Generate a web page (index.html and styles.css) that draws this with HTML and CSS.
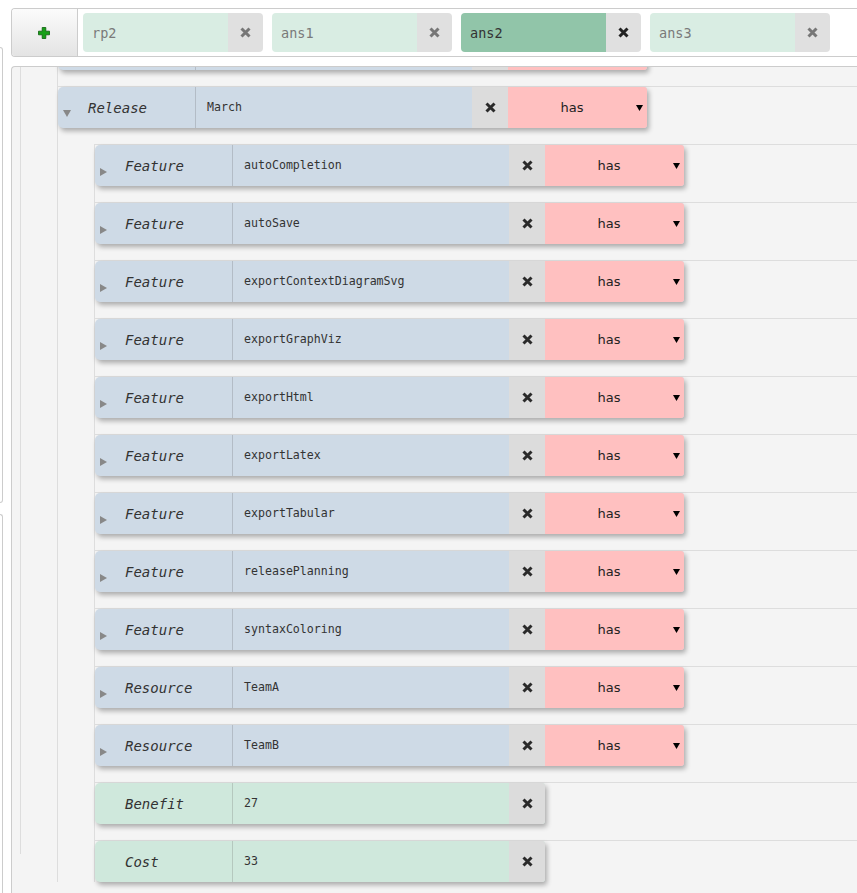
FILE: index.html
```html
<!DOCTYPE html>
<html>
<head>
<meta charset="utf-8">
<title>Model editor</title>
<link rel="stylesheet" href="styles.css">
</head>
<body>
<div class="page">
  <div class="side">
    <div class="side-box first"></div>
    <div class="side-box second"></div>
  </div>
  <div class="main">
    <div class="toolbar">
      <div class="add-btn">
        <svg width="12" height="12" viewBox="0 0 12 12"><path d="M4.2 0.5h3.6v3.7h3.7v3.6H7.8v3.7H4.2V7.8H0.5V4.2h3.7z" fill="#17a017" stroke="#0b5e0b" stroke-width="0.8"/></svg>
      </div>
      <div class="tabs">
        <div class="tab"><span class="tab-label">rp2</span><span class="tab-close"><svg class="x" width="11" height="11" viewBox="0 0 11 11"><path d="M1.5 1.5L9.5 9.5M9.5 1.5L1.5 9.5"/></svg></span></div>
        <div class="tab"><span class="tab-label">ans1</span><span class="tab-close"><svg class="x" width="11" height="11" viewBox="0 0 11 11"><path d="M1.5 1.5L9.5 9.5M9.5 1.5L1.5 9.5"/></svg></span></div>
        <div class="tab active"><span class="tab-label">ans2</span><span class="tab-close"><svg class="x" width="11" height="11" viewBox="0 0 11 11"><path d="M1.5 1.5L9.5 9.5M9.5 1.5L1.5 9.5"/></svg></span></div>
        <div class="tab"><span class="tab-label">ans3</span><span class="tab-close"><svg class="x" width="11" height="11" viewBox="0 0 11 11"><path d="M1.5 1.5L9.5 9.5M9.5 1.5L1.5 9.5"/></svg></span></div>
      </div>
    </div>

    <div class="panel">
      <div class="level level-1">
        <div class="level level-2">
          <div class="row row-clipped">
            <div class="block blue">
              <div class="type"><span class="toggle"></span></div>
              <div class="value"></div>
              <div class="remove"></div>
              <div class="relation"></div>
            </div>
          </div>
          <div class="row">
            <div class="block blue">
              <div class="type"><span class="toggle down"><svg width="8" height="7" viewBox="0 0 8 7"><path d="M0 0H8L4 7z"/></svg></span><span class="type-name">Release</span></div>
              <div class="value">March</div>
              <div class="remove"><svg class="x" width="11" height="11" viewBox="0 0 11 11"><path d="M1.5 1.5L9.5 9.5M9.5 1.5L1.5 9.5"/></svg></div>
              <div class="relation"><span class="relation-label">has</span><svg class="relation-arrow" width="7" height="6" viewBox="0 0 7 6"><path d="M0 0H7L3.5 6z"/></svg></div>
            </div>
            <div class="level level-3">
              <div class="row">
                <div class="block blue">
                  <div class="type"><span class="toggle"><svg width="8" height="8" viewBox="0 0 8 8"><path d="M0 0L7 4L0 8z"/></svg></span><span class="type-name">Feature</span></div>
                  <div class="value">autoCompletion</div>
                  <div class="remove"><svg class="x" width="11" height="11" viewBox="0 0 11 11"><path d="M1.5 1.5L9.5 9.5M9.5 1.5L1.5 9.5"/></svg></div>
                  <div class="relation"><span class="relation-label">has</span><svg class="relation-arrow" width="7" height="6" viewBox="0 0 7 6"><path d="M0 0H7L3.5 6z"/></svg></div>
                </div>
              </div>
              <div class="row">
                <div class="block blue">
                  <div class="type"><span class="toggle"><svg width="8" height="8" viewBox="0 0 8 8"><path d="M0 0L7 4L0 8z"/></svg></span><span class="type-name">Feature</span></div>
                  <div class="value">autoSave</div>
                  <div class="remove"><svg class="x" width="11" height="11" viewBox="0 0 11 11"><path d="M1.5 1.5L9.5 9.5M9.5 1.5L1.5 9.5"/></svg></div>
                  <div class="relation"><span class="relation-label">has</span><svg class="relation-arrow" width="7" height="6" viewBox="0 0 7 6"><path d="M0 0H7L3.5 6z"/></svg></div>
                </div>
              </div>
              <div class="row">
                <div class="block blue">
                  <div class="type"><span class="toggle"><svg width="8" height="8" viewBox="0 0 8 8"><path d="M0 0L7 4L0 8z"/></svg></span><span class="type-name">Feature</span></div>
                  <div class="value">exportContextDiagramSvg</div>
                  <div class="remove"><svg class="x" width="11" height="11" viewBox="0 0 11 11"><path d="M1.5 1.5L9.5 9.5M9.5 1.5L1.5 9.5"/></svg></div>
                  <div class="relation"><span class="relation-label">has</span><svg class="relation-arrow" width="7" height="6" viewBox="0 0 7 6"><path d="M0 0H7L3.5 6z"/></svg></div>
                </div>
              </div>
              <div class="row">
                <div class="block blue">
                  <div class="type"><span class="toggle"><svg width="8" height="8" viewBox="0 0 8 8"><path d="M0 0L7 4L0 8z"/></svg></span><span class="type-name">Feature</span></div>
                  <div class="value">exportGraphViz</div>
                  <div class="remove"><svg class="x" width="11" height="11" viewBox="0 0 11 11"><path d="M1.5 1.5L9.5 9.5M9.5 1.5L1.5 9.5"/></svg></div>
                  <div class="relation"><span class="relation-label">has</span><svg class="relation-arrow" width="7" height="6" viewBox="0 0 7 6"><path d="M0 0H7L3.5 6z"/></svg></div>
                </div>
              </div>
              <div class="row">
                <div class="block blue">
                  <div class="type"><span class="toggle"><svg width="8" height="8" viewBox="0 0 8 8"><path d="M0 0L7 4L0 8z"/></svg></span><span class="type-name">Feature</span></div>
                  <div class="value">exportHtml</div>
                  <div class="remove"><svg class="x" width="11" height="11" viewBox="0 0 11 11"><path d="M1.5 1.5L9.5 9.5M9.5 1.5L1.5 9.5"/></svg></div>
                  <div class="relation"><span class="relation-label">has</span><svg class="relation-arrow" width="7" height="6" viewBox="0 0 7 6"><path d="M0 0H7L3.5 6z"/></svg></div>
                </div>
              </div>
              <div class="row">
                <div class="block blue">
                  <div class="type"><span class="toggle"><svg width="8" height="8" viewBox="0 0 8 8"><path d="M0 0L7 4L0 8z"/></svg></span><span class="type-name">Feature</span></div>
                  <div class="value">exportLatex</div>
                  <div class="remove"><svg class="x" width="11" height="11" viewBox="0 0 11 11"><path d="M1.5 1.5L9.5 9.5M9.5 1.5L1.5 9.5"/></svg></div>
                  <div class="relation"><span class="relation-label">has</span><svg class="relation-arrow" width="7" height="6" viewBox="0 0 7 6"><path d="M0 0H7L3.5 6z"/></svg></div>
                </div>
              </div>
              <div class="row">
                <div class="block blue">
                  <div class="type"><span class="toggle"><svg width="8" height="8" viewBox="0 0 8 8"><path d="M0 0L7 4L0 8z"/></svg></span><span class="type-name">Feature</span></div>
                  <div class="value">exportTabular</div>
                  <div class="remove"><svg class="x" width="11" height="11" viewBox="0 0 11 11"><path d="M1.5 1.5L9.5 9.5M9.5 1.5L1.5 9.5"/></svg></div>
                  <div class="relation"><span class="relation-label">has</span><svg class="relation-arrow" width="7" height="6" viewBox="0 0 7 6"><path d="M0 0H7L3.5 6z"/></svg></div>
                </div>
              </div>
              <div class="row">
                <div class="block blue">
                  <div class="type"><span class="toggle"><svg width="8" height="8" viewBox="0 0 8 8"><path d="M0 0L7 4L0 8z"/></svg></span><span class="type-name">Feature</span></div>
                  <div class="value">releasePlanning</div>
                  <div class="remove"><svg class="x" width="11" height="11" viewBox="0 0 11 11"><path d="M1.5 1.5L9.5 9.5M9.5 1.5L1.5 9.5"/></svg></div>
                  <div class="relation"><span class="relation-label">has</span><svg class="relation-arrow" width="7" height="6" viewBox="0 0 7 6"><path d="M0 0H7L3.5 6z"/></svg></div>
                </div>
              </div>
              <div class="row">
                <div class="block blue">
                  <div class="type"><span class="toggle"><svg width="8" height="8" viewBox="0 0 8 8"><path d="M0 0L7 4L0 8z"/></svg></span><span class="type-name">Feature</span></div>
                  <div class="value">syntaxColoring</div>
                  <div class="remove"><svg class="x" width="11" height="11" viewBox="0 0 11 11"><path d="M1.5 1.5L9.5 9.5M9.5 1.5L1.5 9.5"/></svg></div>
                  <div class="relation"><span class="relation-label">has</span><svg class="relation-arrow" width="7" height="6" viewBox="0 0 7 6"><path d="M0 0H7L3.5 6z"/></svg></div>
                </div>
              </div>
              <div class="row">
                <div class="block blue">
                  <div class="type"><span class="toggle"><svg width="8" height="8" viewBox="0 0 8 8"><path d="M0 0L7 4L0 8z"/></svg></span><span class="type-name">Resource</span></div>
                  <div class="value">TeamA</div>
                  <div class="remove"><svg class="x" width="11" height="11" viewBox="0 0 11 11"><path d="M1.5 1.5L9.5 9.5M9.5 1.5L1.5 9.5"/></svg></div>
                  <div class="relation"><span class="relation-label">has</span><svg class="relation-arrow" width="7" height="6" viewBox="0 0 7 6"><path d="M0 0H7L3.5 6z"/></svg></div>
                </div>
              </div>
              <div class="row">
                <div class="block blue">
                  <div class="type"><span class="toggle"><svg width="8" height="8" viewBox="0 0 8 8"><path d="M0 0L7 4L0 8z"/></svg></span><span class="type-name">Resource</span></div>
                  <div class="value">TeamB</div>
                  <div class="remove"><svg class="x" width="11" height="11" viewBox="0 0 11 11"><path d="M1.5 1.5L9.5 9.5M9.5 1.5L1.5 9.5"/></svg></div>
                  <div class="relation"><span class="relation-label">has</span><svg class="relation-arrow" width="7" height="6" viewBox="0 0 7 6"><path d="M0 0H7L3.5 6z"/></svg></div>
                </div>
              </div>
              <div class="row row-green">
                <div class="block green">
                  <div class="type"><span class="toggle"></span><span class="type-name">Benefit</span></div>
                  <div class="value">27</div>
                  <div class="remove"><svg class="x" width="11" height="11" viewBox="0 0 11 11"><path d="M1.5 1.5L9.5 9.5M9.5 1.5L1.5 9.5"/></svg></div>
                </div>
              </div>
              <div class="row">
                <div class="block green">
                  <div class="type"><span class="toggle"></span><span class="type-name">Cost</span></div>
                  <div class="value">33</div>
                  <div class="remove"><svg class="x" width="11" height="11" viewBox="0 0 11 11"><path d="M1.5 1.5L9.5 9.5M9.5 1.5L1.5 9.5"/></svg></div>
                </div>
              </div>
            </div>
          </div>
        </div>
      </div>
    </div>
  </div>
</div>
</body>
</html>
```

FILE: styles.css
```css
* { box-sizing: border-box; }

html, body {
  margin: 0;
  padding: 0;
  background: #ffffff;
}

body {
  font-family: "DejaVu Sans", sans-serif;
  height: 893px;
  overflow: hidden;
}

.page {
  display: flex;
  height: 893px;
}

/* partially visible column on the far left */
.side {
  width: 3px;
  flex: none;
  display: flex;
  flex-direction: column;
}

.side-box {
  border: 1px solid #cccccc;
  border-left: none;
  border-radius: 0 4px 4px 0;
  background: #ffffff;
}

.side-box.first {
  margin-top: 47px;
  height: 456px;
}

.side-box.second {
  margin-top: 11px;
  flex: 1;
  border-bottom: none;
  border-radius: 0 4px 0 0;
}

.main {
  flex: 1;
  min-width: 0;
  margin-left: 8px;
  padding-top: 8px;
  display: flex;
  flex-direction: column;
}

/* toolbar with tabs */
.toolbar {
  display: flex;
  height: 49px;
  border: 1px solid #cccccc;
  border-right: none;
  border-radius: 4px 0 0 4px;
  background: #ffffff;
  flex: none;
}

.add-btn {
  width: 66px;
  flex: none;
  border-right: 1px solid #cccccc;
  border-radius: 3px 0 0 3px;
  background: linear-gradient(#fbfbfb, #e4e4e4);
  display: flex;
  align-items: center;
  justify-content: center;
  padding-right: 2px;
}

.tabs {
  display: flex;
  align-items: center;
  gap: 9px;
  padding-left: 5px;
}

.tab {
  display: flex;
  width: 180px;
  height: 39px;
  border-radius: 4px;
  overflow: hidden;
}

.tab-label {
  flex: 1;
  display: flex;
  align-items: center;
  padding-left: 9px;
  background: #d9ede3;
  color: #7a7a7a;
  font: 13.5px "DejaVu Sans Mono", monospace;
}

.tab-close {
  width: 35px;
  flex: none;
  display: flex;
  align-items: center;
  justify-content: center;
  background: #e0e0e0;
  color: #777777;
}

.tab.active .tab-label {
  background: #91c5a9;
  color: #333333;
}

.tab.active .tab-close {
  color: #222222;
}

.x path {
  fill: none;
  stroke: currentColor;
  stroke-width: 3;
}

/* tree panel */
.panel {
  margin-top: 9px;
  flex: 1;
  min-height: 0;
  border: 1px solid #cccccc;
  border-right: none;
  border-bottom: none;
  border-radius: 4px 0 0 0;
  background: #f4f4f4;
  overflow: hidden;
}

.level {
  border-left: 1px solid #dddddd;
}

.level-1 {
  margin-left: 8px;
  height: 100%;
}

.level-2 {
  margin-left: 36px;
  min-height: 100%;
}

.level-3 {
  margin-left: 36px;
}

.row {
  border-top: 1px solid #dddddd;
}

.row-clipped {
  margin-top: -39px;
}

.row-green {
  margin-top: 1px;
}

.block {
  display: flex;
  width: max-content;
  height: 41px;
  margin-bottom: 16px;
  border-radius: 5px 3px 3px 5px;
  overflow: hidden;
  box-shadow: 2px 3px 5px rgba(0, 0, 0, 0.3);
}

.block.blue { background: #cedae6; }
.block.green { background: #cfe8dc; }

.type {
  width: 138px;
  flex: none;
  display: flex;
  align-items: center;
  border-right: 1px solid #b3bcc6;
}

.block.green .type {
  border-right-color: #b5c8be;
}

.toggle {
  width: 30px;
  flex: none;
  align-self: flex-end;
  display: flex;
  padding-left: 5px;
  margin-bottom: 10px;
  fill: #888888;
}

.toggle.down {
  margin-bottom: 11px;
}

.type-name {
  font: italic 14px "DejaVu Sans Mono", monospace;
  color: #333333;
}

.value {
  width: 276px;
  flex: none;
  display: flex;
  align-items: center;
  padding-left: 11px;
  padding-bottom: 2px;
  font: 11.6px "DejaVu Sans Mono", monospace;
  color: #333333;
}

.remove {
  width: 36px;
  flex: none;
  display: flex;
  align-items: center;
  justify-content: center;
  background: #dcdcdc;
  color: #2a2a2a;
}

.relation {
  width: 139px;
  flex: none;
  display: flex;
  align-items: center;
  background: #ffc0c0;
}

.relation-label {
  flex: 1;
  text-align: center;
  font: 13px "DejaVu Sans", sans-serif;
  color: #222222;
  padding-bottom: 1px;
}

.relation-arrow {
  margin-right: 4px;
  fill: #000000;
}
```
